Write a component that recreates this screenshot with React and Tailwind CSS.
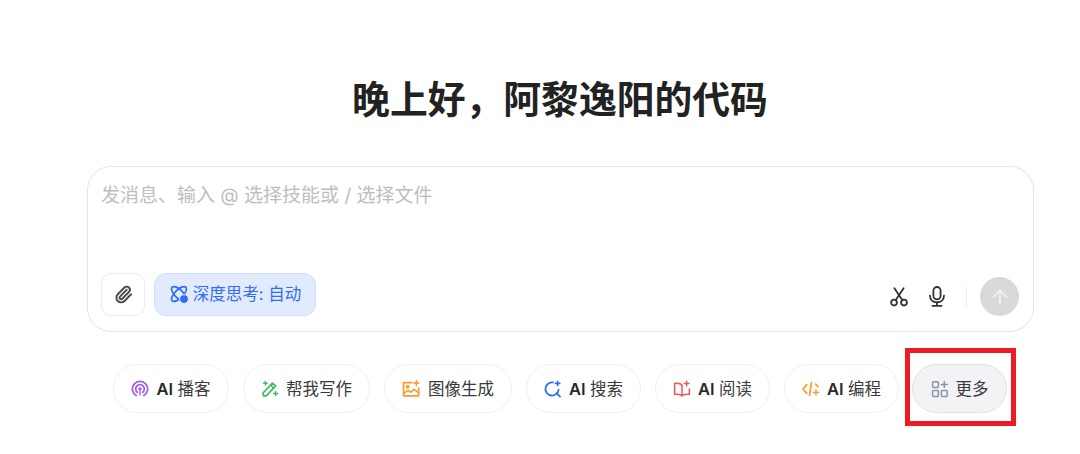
import React from 'react';
import { Paperclip, ArrowUp } from 'lucide-react';

const FONT = "font-['Inter','Noto_Sans_CJK_SC',sans-serif]";

const PodcastIcon = () => (
  <svg width="18" height="18" viewBox="0 0 18 18" fill="none" stroke="#a35be8" strokeWidth="1.7" strokeLinecap="round">
    <path d="M5.2 15.6A7.6 7.6 0 1 1 12.8 15.6" />
    <path d="M6.4 12.4A4.3 4.3 0 1 1 11.6 12.4" />
    <circle cx="9" cy="9" r="1.7" fill="#a35be8" stroke="none" />
    <path d="M9 11.5v3.5" strokeWidth="1.4" />
  </svg>
);

const WriteIcon = () => (
  <svg width="18" height="18" viewBox="0 0 18 18" fill="none" stroke="#3dba62" strokeWidth="1.7" strokeLinejoin="round" strokeLinecap="round">
    <path d="M2.4 15.8 2 13 11.4 3.2 14.6 6 5.2 15.8Z" />
    <path d="M9.6 5.2 12.6 8" />
    <path d="M4.4 1.4v3.6M2.6 3.2h3.6M14.6 11.6v4M12.6 13.6h4" strokeWidth="1.5" />
  </svg>
);

const ImageIcon = () => (
  <svg width="19" height="18" viewBox="0 0 19 18" fill="none" stroke="#fb9d2c" strokeWidth="1.7" strokeLinejoin="round" strokeLinecap="round">
    <path d="M10 2.6H1.6v13.2h15V8" />
    <circle cx="5.6" cy="6.8" r="1.2" />
    <path d="M1.6 13.2 6 10.4l2.8 1.8 3.2-2.8 4.6 3.4" />
    <path d="M14.4.8v4.6M12.1 3.1h4.6" />
  </svg>
);

const SearchIcon = () => (
  <svg width="18" height="18" viewBox="0 0 18 18" fill="none" stroke="#2f6df6" strokeWidth="1.8" strokeLinecap="round">
    <path d="M9 2.4A6.6 6.6 0 1 0 14.6 9.6" />
    <path d="M12.6 13.2 16 16.6" />
    <path d="M13.6 1.2v4.4M11.4 3.4h4.4" strokeWidth="1.6" />
  </svg>
);

const ReadIcon = () => (
  <svg width="18" height="18" viewBox="0 0 18 18" fill="none" stroke="#f4524d" strokeWidth="1.5" strokeLinejoin="round" strokeLinecap="round">
    <path d="M9 5.4C8 3.8 5.4 3.2 1.6 3.4v10.8c3.6-.2 6.2.2 7.4 1.6 1.2-1.4 3.8-1.8 7.4-1.6V9" />
    <path d="M9 5.4v10.4" />
    <path d="M13.6 1.2v4.6M11.3 3.5h4.6" />
  </svg>
);

const CodeIcon = () => (
  <svg width="18" height="18" viewBox="0 0 18 18" fill="none" stroke="#fb9d2c" strokeWidth="1.7" strokeLinejoin="round" strokeLinecap="round">
    <path d="M4.8 4.6 1 9l3.8 4.4" />
    <path d="M9.4 2.6 7.6 15.4" />
    <path d="M13.6 4.2 16 6.6" />
    <path d="M14 9.8v5.2M11.4 12.4h5.2" strokeWidth="1.5" />
  </svg>
);

const MoreIcon = () => (
  <svg width="18" height="18" viewBox="0 0 18 18" fill="none" stroke="#8b90ad" strokeWidth="1.5" strokeLinejoin="round" strokeLinecap="round">
    <rect x="1.6" y="1.8" width="5.8" height="5.8" rx="1" />
    <rect x="1.6" y="10.6" width="5.8" height="5.8" rx="1" />
    <rect x="10.4" y="10.6" width="5.8" height="5.8" rx="1" />
    <path d="M13.3 1.6v6M10.3 4.6h6" />
  </svg>
);

const AtomIcon = () => (
  <svg width="19" height="19" viewBox="0 0 19 19" fill="none" stroke="#2f6df6" strokeWidth="1.7">
    <ellipse cx="9" cy="9" rx="9.6" ry="4.2" transform="rotate(45 9 9)" />
    <ellipse cx="9" cy="9" rx="9.6" ry="4.2" transform="rotate(-45 9 9)" />
    <circle cx="14" cy="14" r="4.4" fill="#2f6df6" stroke="#e2ebfd" strokeWidth="1" />
  </svg>
);

const ScissorsIcon = () => (
  <svg width="18" height="20" viewBox="0 0 18 20" fill="none" stroke="#333333" strokeWidth="1.8" strokeLinecap="round">
    <circle cx="4" cy="15.6" r="2.9" />
    <circle cx="14" cy="15.6" r="2.9" />
    <path d="M5.6 13.2 13.6 1.2" />
    <path d="M12.4 13.2 4.4 1.2" />
  </svg>
);

const MicIcon = () => (
  <svg width="18" height="21" viewBox="0 0 18 21" fill="none" stroke="#333333" strokeWidth="1.8" strokeLinecap="round">
    <rect x="5.4" y="1" width="7.2" height="12.4" rx="3.6" />
    <path d="M2 9.6c0 4.4 3 6.8 7 6.8s7-2.4 7-6.8" />
    <path d="M9 16.4v3.4M4.4 19.8h9.2" />
  </svg>
);

const chips = [
  { label: 'AI 播客', icon: <PodcastIcon />, width: 'w-[116px]', strong: true },
  { label: '帮我写作', icon: <WriteIcon />, width: 'w-[127px]' },
  { label: '图像生成', icon: <ImageIcon />, width: 'w-[128px]' },
  { label: 'AI 搜索', icon: <SearchIcon />, width: 'w-[115px]', strong: true },
  { label: 'AI 阅读', icon: <ReadIcon />, width: 'w-[115px]', strong: true },
  { label: 'AI 编程', icon: <CodeIcon />, width: 'w-[115px]', strong: true },
];

const Chip = ({ label, icon, width, active, strong }) => (
  <div
    className={`${width} h-[49px] rounded-full border flex items-center justify-center gap-[7px] text-[16.5px] text-[#3a3a3a] ${
      active ? 'bg-[#f3f3f5] border-[#e2e2e4]' : 'bg-white border-[#efefef]'
    }`}
  >
    {icon}
    {strong ? (
      <span className="pt-px">
        <span className="font-semibold text-[#2a2a2a]">AI</span> {label.slice(3)}
      </span>
    ) : (
      <span className="pt-px">{label}</span>
    )}
  </div>
);

const App = () => {
  return (
    <div className={`${FONT} w-[1080px] h-[454px] bg-white overflow-hidden relative`}>
      <h1 className="pl-[40px] pt-[75px] h-[166px] text-center text-[37.8px] leading-[48px] font-bold text-[#222222]">
        晚上好，阿黎逸阳的代码
      </h1>

      <div className="ml-[87px] w-[947px] h-[166px] rounded-[24px] border border-[#e5e5e5] bg-white pl-[13px] pr-[14px] pt-[15px] pb-[15px] flex flex-col justify-between">
        <p className="text-[19px] leading-[28px] text-[#bdbdbd]">发消息、输入 @ 选择技能或 / 选择文件</p>
        <div className="flex items-center justify-between">
          <div className="flex items-center gap-[9px]">
            <div className="w-[44px] h-[43px] rounded-[10px] border border-[#ececec] flex items-center justify-center">
              <Paperclip size={19} strokeWidth={2.4} color="#4a4a4a" />
            </div>
            <div className="h-[43px] w-[162px] rounded-[12px] border border-[#cfdefb] bg-[#e2ebfd] flex items-center justify-center gap-[4px] pl-px text-[16.5px] text-[#2f6df6]">
              <AtomIcon />
              <span>深度思考: 自动</span>
            </div>
          </div>
          <div className="flex items-center mt-[4px]">
            <ScissorsIcon />
            <div className="ml-[20px]">
              <MicIcon />
            </div>
            <div className="ml-[20px] w-px h-[22px] bg-[#efefef]" />
            <div className="ml-[13px] w-[39px] h-[39px] rounded-full bg-[#d9d9d9] flex items-center justify-center">
              <ArrowUp size={22} strokeWidth={2.2} color="#eeeeee" />
            </div>
          </div>
        </div>
      </div>

      <div className="pl-[40px] mt-[32px] flex justify-center gap-[14px]">
        {chips.map((chip) => (
          <Chip key={chip.label} {...chip} />
        ))}
        <div className="-ml-px">
          <Chip label="更多" icon={<MoreIcon />} width="w-[95px]" active />
        </div>
      </div>

      {/* annotation box drawn over the screenshot */}
      <div className="absolute left-[905px] top-[348px] w-[111px] h-[78px] border-[5px] border-[#ed1c24]" />
    </div>
  );
};

export default App;
